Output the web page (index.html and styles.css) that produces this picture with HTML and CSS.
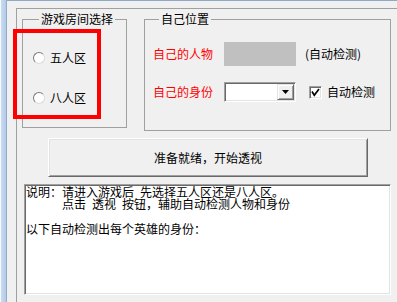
FILE: index.html
```html
<!DOCTYPE html>
<html lang="zh-CN">
<head>
<meta charset="utf-8">
<title>透视</title>
<link rel="stylesheet" href="styles.css">
</head>
<body>
<div class="window">
  <div class="edge"></div>
  <div class="client">
    <div class="panel">
      <div class="groups">
        <fieldset class="group group-room">
          <legend>游戏房间选择</legend>
          <div class="radio-row"><span class="radio"></span><span>五人区</span></div>
          <div class="radio-row"><span class="radio"></span><span>八人区</span></div>
        </fieldset>
        <fieldset class="group group-self">
          <legend>自己位置</legend>
          <div class="row row-hero">
            <span class="red-label">自己的人物</span>
            <span class="gray-box"></span>
            <span class="hint">(自动检测)</span>
          </div>
          <div class="row row-role">
            <span class="red-label">自己的身份</span>
            <span class="combo">
              <span class="combo-btn">
                <svg width="7" height="4" viewBox="0 0 7 4"><polygon points="0,0 7,0 3.5,4" fill="#000"/></svg>
              </span>
            </span>
            <span class="check">
              <svg width="9" height="9" viewBox="0 0 9 9"><path d="M1 3.5 L3.3 7.2 L8 1" fill="none" stroke="#000" stroke-width="1.7"/></svg>
            </span>
            <span>自动检测</span>
          </div>
        </fieldset>
      </div>
      <div class="start-btn">准备就绪，开始透视</div>
      <div class="log">
        <div class="line">说明：请进入游戏后&#8194;先选择五人区还是八人区。</div>
        <div class="line indent">点击&#8194;透视&#8194;按钮，辅助自动检测人物和身份</div>
        <div class="line blank"></div>
        <div class="line">以下自动检测出每个英雄的身份：</div>
      </div>
    </div>
  </div>
  <div class="highlight"></div>
</div>
</body>
</html>
```
FILE: styles.css
```css
html, body {
  margin: 0;
  padding: 0;
}
body {
  background: #f0f0f0;
  font-family: "Noto Sans CJK SC", sans-serif;
  font-size: 12px;
  line-height: 12px;
  color: #000;
}
.window {
  position: relative;
  display: flex;
  width: 397px;
  height: 302px;
  overflow: hidden;
}
.edge {
  flex: none;
  width: 7px;
  background: linear-gradient(to right, #f6f9fd 0, #f6f9fd 1px, #c9dcf1 1px, #b2cbe8 6px, #94acc9 6px, #94acc9 7px);
}
.client {
  flex: 1;
  border-top: 1px solid #8fa8c6;
  padding: 7px 0 0 9px;
}
.panel {
  height: 100%;
  border-top: 1px solid #a0a0a0;
  border-left: 1px solid #a0a0a0;
}
.groups {
  display: flex;
  align-items: flex-start;
  margin: 4px 0 0 5px;
}
.group {
  margin: 0;
  min-width: 0;
  box-sizing: border-box;
  border: 1px solid #a0a0a0;
}
.group legend {
  margin-left: 6px;
  padding: 0 2px;
  font-size: 12px;
  line-height: 12px;
}
.group-room {
  width: 105px;
  height: 115px;
  padding: 26px 0 0 10px;
  display: flex;
  flex-direction: column;
  gap: 27px;
}
.radio-row {
  display: flex;
  align-items: center;
  height: 13px;
}
.radio {
  width: 12px;
  height: 12px;
  box-sizing: border-box;
  border-radius: 50%;
  border: 1px solid;
  border-color: #7a7a7a #dadada #dadada #7a7a7a;
  background: #fff;
  margin-right: 5px;
}
.group-self {
  width: 247px;
  height: 118px;
  margin-left: 17px;
  padding: 17px 0 0 8px;
}
.row {
  display: flex;
  align-items: center;
}
.row-hero {
  height: 24px;
}
.row-role {
  height: 20px;
  margin-top: 16px;
}
.red-label {
  color: #ff0000;
  width: 60px;
  margin-right: 11px;
}
.gray-box {
  width: 72px;
  height: 24px;
  background: #c0c0c0;
}
.hint {
  margin-left: 9px;
}
.combo {
  width: 72px;
  height: 20px;
  box-sizing: border-box;
  display: flex;
  justify-content: flex-end;
  padding: 1px;
  background: #fff;
  border: 1px solid;
  border-color: #a0a0a0 #fff #fff #a0a0a0;
  box-shadow: inset 1px 1px 0 #696969, inset -1px -1px 0 #e3e3e3;
}
.combo-btn {
  width: 17px;
  height: 16px;
  box-sizing: border-box;
  display: flex;
  align-items: center;
  justify-content: center;
  background: #f0f0f0;
  border: 1px solid;
  border-color: #e3e3e3 #696969 #696969 #e3e3e3;
  box-shadow: inset 1px 1px 0 #fff, inset -1px -1px 0 #a0a0a0;
}
.check {
  width: 13px;
  height: 13px;
  box-sizing: border-box;
  margin: 0 5px 0 13px;
  display: flex;
  align-items: center;
  justify-content: center;
  background: #fff;
  border: 1px solid;
  border-color: #a0a0a0 #fff #fff #a0a0a0;
  box-shadow: inset 1px 1px 0 #696969, inset -1px -1px 0 #e3e3e3;
}
.start-btn {
  width: 320px;
  height: 39px;
  box-sizing: border-box;
  margin: 7px 0 0 31px;
  display: flex;
  align-items: center;
  justify-content: center;
  border: 1px solid;
  border-color: #fff #696969 #696969 #fff;
  box-shadow: inset 1px 1px 0 #e3e3e3, inset -1px -1px 0 #a0a0a0;
}
.log {
  width: 367px;
  height: 111px;
  box-sizing: border-box;
  margin: 7px 0 0 7px;
  padding: 1px;
  background: #fff;
  border: 1px solid;
  border-color: #a0a0a0 #fff #fff #a0a0a0;
  box-shadow: inset 1px 1px 0 #696969, inset -1px -1px 0 #e3e3e3;
  line-height: 12.4px;
}
.line {
  white-space: pre;
  height: 12.4px;
}
.indent {
  padding-left: 36px;
}
.highlight {
  position: absolute;
  left: 13px;
  top: 29px;
  width: 88px;
  height: 90px;
  box-sizing: border-box;
  border: 4px solid #ff0000;
}
```
